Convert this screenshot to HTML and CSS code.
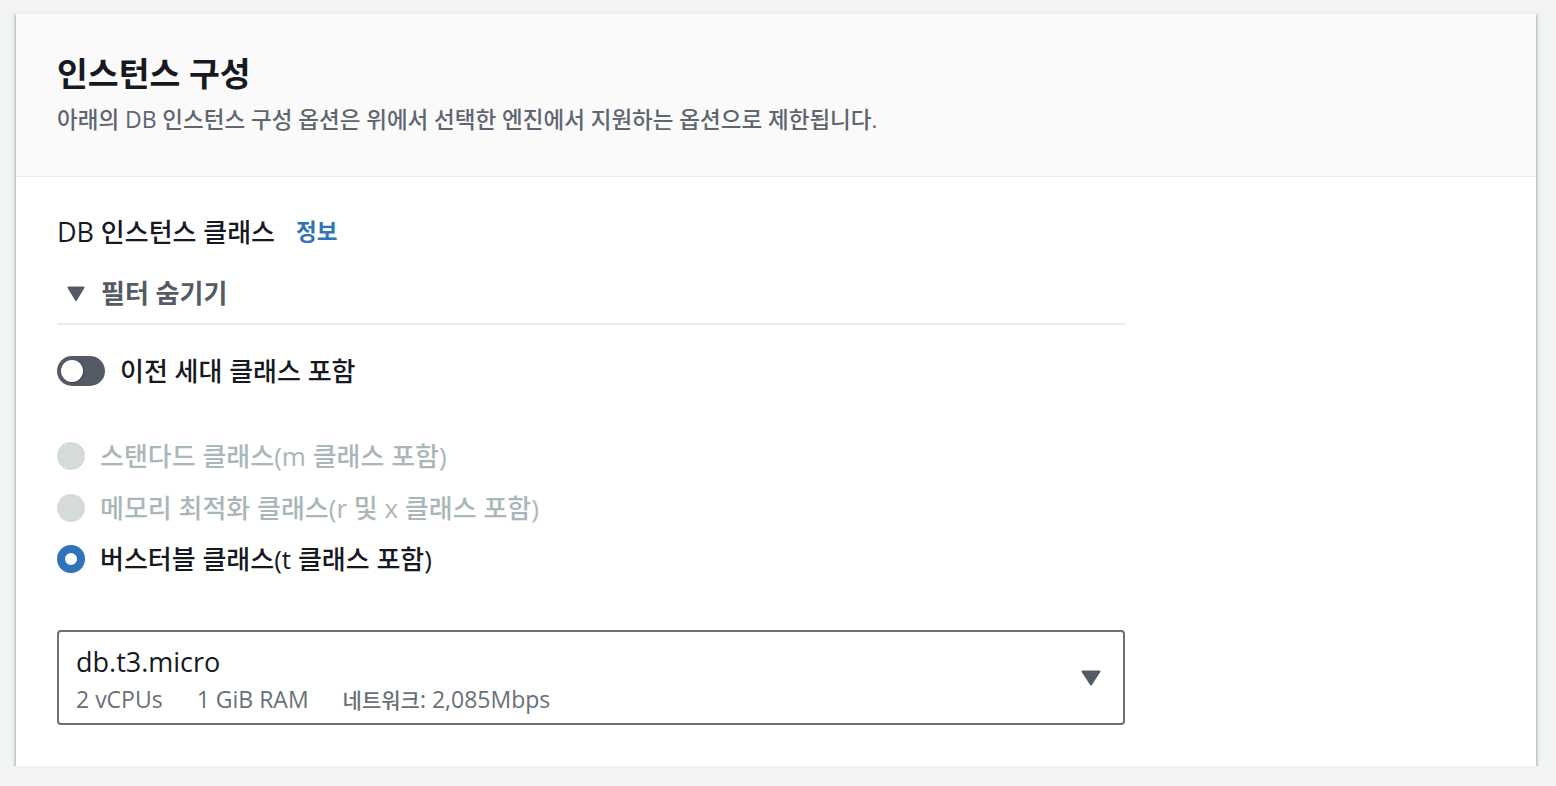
FILE: index.html
```html
<!DOCTYPE html>
<html lang="ko">
<head>
<meta charset="utf-8">
<title>인스턴스 구성</title>
<link rel="stylesheet" href="styles.css">
</head>
<body>
<section class="card">
  <header class="card-header">
    <h2 class="title">인스턴스 구성</h2>
    <p class="desc">아래의 <span class="lat-sm">DB</span> 인스턴스 구성 옵션은 위에서 선택한 엔진에서 지원하는 옵션으로 제한됩니다.</p>
  </header>
  <div class="card-body">
    <div class="form-col">
      <div class="label-row">
        <span class="label"><span class="lat">DB</span> 인스턴스 클래스</span>
        <a class="info" href="#">정보</a>
      </div>
      <div class="filter-head">
        <svg class="caret-sm" width="18" height="15" viewBox="0 0 18 15"><path d="M1.5 1.5 H16.5 L9 14 Z" fill="#545b64" stroke="#545b64" stroke-width="2" stroke-linejoin="round"/></svg>
        <span>필터 숨기기</span>
      </div>
      <div class="divider"></div>
      <div class="toggle-row">
        <span class="toggle"><span class="knob"></span></span>
        <span class="toggle-label">이전 세대 클래스 포함</span>
      </div>
      <div class="radios">
        <div class="radio disabled"><span class="dot"></span><span>스탠다드 클래스(m 클래스 포함)</span></div>
        <div class="radio disabled"><span class="dot"></span><span>메모리 최적화 클래스(r 및 x 클래스 포함)</span></div>
        <div class="radio checked"><span class="dot"></span><span>버스터블 클래스(t 클래스 포함)</span></div>
      </div>
      <div class="select">
        <div class="select-text">
          <div class="select-value">db.t3.micro</div>
          <div class="select-tags">
            <span>2 vCPUs</span>
            <span>1 GiB RAM</span>
            <span><span class="ko">네트워크</span>: 2,085Mbps</span>
          </div>
        </div>
        <svg class="caret" width="20" height="16" viewBox="0 0 20 16"><path d="M1.5 1.5 H18.5 L10 14.5 Z" fill="#545b64" stroke="#545b64" stroke-width="2" stroke-linejoin="round"/></svg>
      </div>
    </div>
  </div>
</section>
</body>
</html>
```

FILE: styles.css
```css
* { box-sizing: border-box; }

html, body {
  margin: 0;
  padding: 0;
  background: #f2f3f3;
}

body {
  font-family: "Open Sans", "Noto Sans CJK KR", sans-serif;
  font-weight: 500;
  color: #16191f;
  padding: 13px 20px 0 16px;
}

.card {
  background: #ffffff;
  box-shadow: 0 2px 1px 0 rgba(0, 28, 36, 0.4), 2px 1px 2px 0 rgba(0, 28, 36, 0.15), -2px 1px 2px 0 rgba(0, 28, 36, 0.15);
  border-top: 1px solid #eaeded;
}

.card-header {
  background: #fafafa;
  border-bottom: 1px solid #eaeded;
  padding: 40px 41px 43px;
}

.title {
  margin: 0;
  font-size: 33.5px;
  line-height: 38px;
  font-weight: 700;
  color: #16191f;
}

.desc {
  margin: 14px 0 0;
  font-size: 22.5px;
  line-height: 27px;
  color: #5f6670;
}

.lat { font-size: 27px; }
.lat-sm { font-size: 23px; }

.card-body {
  padding: 38px 41px 41px;
}

.form-col {
  width: 1068px;
  display: flex;
  flex-direction: column;
}

.label-row {
  display: flex;
  align-items: center;
  gap: 21px;
  height: 34px;
  font-size: 26px;
  line-height: 34px;
}

.info {
  font-size: 22.5px;
  font-weight: 700;
  color: #2f73b9;
  text-decoration: none;
}

.filter-head {
  margin-top: 27px;
  display: flex;
  align-items: center;
  height: 34px;
  padding-left: 10px;
  gap: 16px;
  font-size: 26px;
  line-height: 34px;
  font-weight: 700;
  color: #545b64;
}

.divider {
  margin-top: 13px;
  height: 2px;
  background: #eaeded;
}

.toggle-row {
  margin-top: 29px;
  display: flex;
  align-items: center;
  height: 34px;
  gap: 15px;
  font-size: 26px;
  line-height: 34px;
}

.toggle {
  width: 48px;
  height: 30px;
  border-radius: 15px;
  background: #545b64;
  display: flex;
  align-items: center;
  padding-left: 4px;
}

.knob {
  width: 22px;
  height: 22px;
  border-radius: 50%;
  background: #ffffff;
  box-shadow: 1px 1px 2px rgba(0, 0, 0, 0.25);
}

.radios {
  margin-top: 51px;
  display: flex;
  flex-direction: column;
  gap: 17.5px;
}

.radio {
  display: flex;
  align-items: center;
  gap: 15px;
  height: 34px;
  font-size: 26px;
  line-height: 34px;
  color: #16191f;
}

.dot {
  width: 28px;
  height: 28px;
  border-radius: 50%;
  flex: none;
}

.radio.disabled { color: #aab7b8; }
.radio.disabled .dot { background: #d5dbdb; }

.radio.checked .dot {
  background: #ffffff;
  border: 8px solid #2f73b9;
}

.select {
  margin-top: 54px;
  height: 95px;
  border: 2px solid #687078;
  border-radius: 4px;
  display: flex;
  align-items: center;
  justify-content: space-between;
  padding: 0 22px 0 17px;
}

.select-text {
  display: flex;
  flex-direction: column;
  padding-top: 3px;
}

.select-value {
  font-size: 27px;
  line-height: 34px;
  color: #16191f;
}

.select-tags {
  display: flex;
  gap: 34px;
  margin-top: 7px;
  font-size: 23px;
  line-height: 27px;
  color: #687078;
}

.select-tags .ko { font-size: 21px; }
```
